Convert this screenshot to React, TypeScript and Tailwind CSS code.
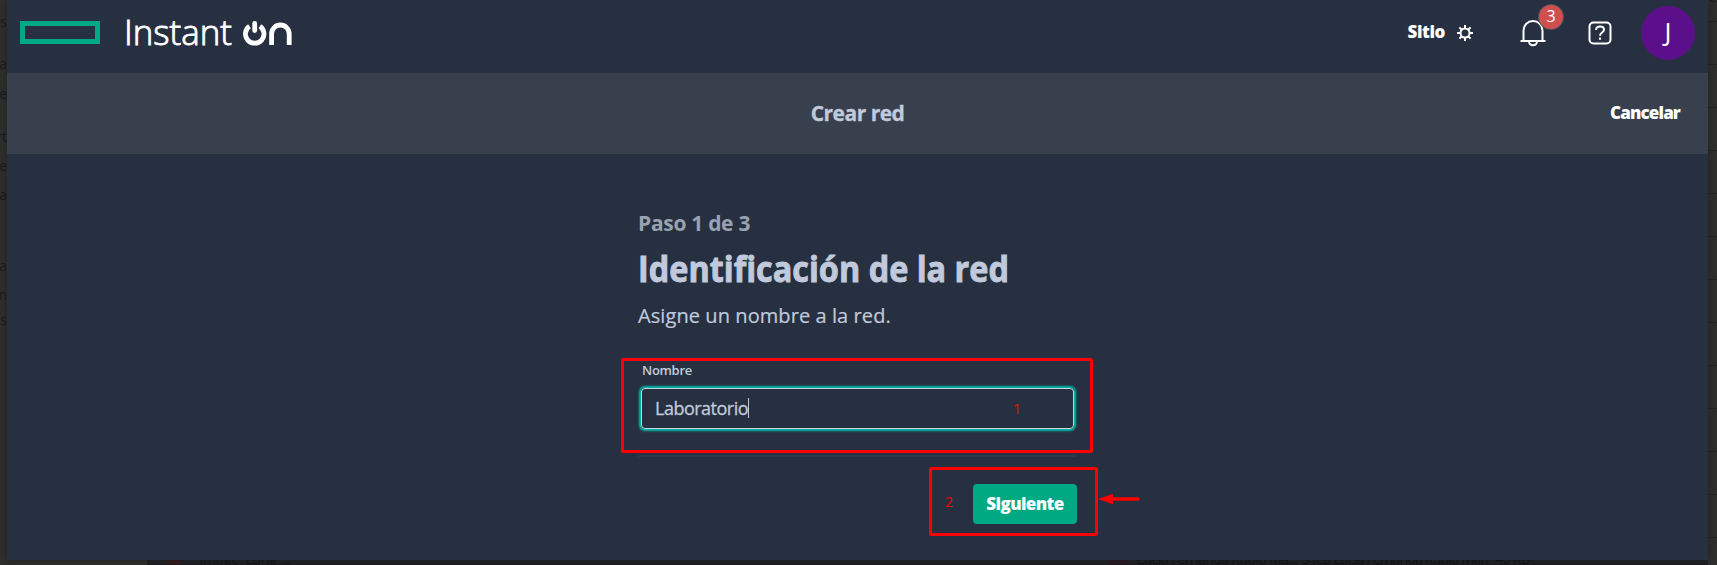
import React from "react";

const LEFT_WORDS = [
  { text: "os", top: "top-[12px]" },
  { text: "a", top: "top-[54px]" },
  { text: "be", top: "top-[84px]" },
  { text: "rt", top: "top-[127px]" },
  { text: "te", top: "top-[156px]" },
  { text: "a", top: "top-[185px]" },
  { text: "ra", top: "top-[256px]" },
  { text: "en", top: "top-[285px]" },
  { text: "us", top: "top-[310px]" },
];

const ROW_LINES = Array.from({ length: 13 }, (_, i) => i);

function Logo() {
  return (
    <div className="flex items-center">
      <div className="w-20 h-[23px] border-[5px] border-[#01a982]" />
      <svg width="175" height="40" viewBox="0 0 175 40" className="ml-6">
        <text
          x="0"
          y="32.5"
          fill="#fff"
          stroke="#fff"
          strokeWidth="0.9"
          fontSize="35.5"
          fontWeight="300"
          fontFamily="'Open Sans', sans-serif"
          textLength="108"
          lengthAdjust="spacingAndGlyphs"
        >
          Instant
        </text>
        <g fill="none" stroke="#fff" strokeWidth="4.8">
          <path d="M125.500 14.200a9.300 9.300 0 1 0 10.400 0" />
          <path d="M130.700 11.500v7" strokeLinecap="round" />
          <path d="M147.600 33V21.800a8.800 8.800 0 0 1 17.600 0V33" />
        </g>
      </svg>
    </div>
  );
}

function GearIcon() {
  return (
    <svg width="16" height="16" viewBox="0 0 16 16" fill="none" stroke="#fff" strokeWidth="2">
      <circle cx="8" cy="8" r="4.500" />
      <path d="M8 3.500V0M8 16v-3.500M3.500 8H0M16 8h-3.500M4.800 4.800 2.400 2.400M13.600 13.600l-2.400-2.400M4.800 11.200l-2.400 2.400M13.600 2.400l-2.400 2.400" />
    </svg>
  );
}

function BellIcon() {
  return (
    <svg width="26" height="28" viewBox="0 0 26 28" fill="none" stroke="#fff" strokeWidth="2">
      <path d="M3.500 22V11.500a9.500 9.500 0 0 1 19 0V22" />
      <path d="M.5 22h25" />
      <path d="M9 22.500a4 3.800 0 0 0 8 0" />
    </svg>
  );
}

function HelpIcon() {
  return (
    <svg width="24" height="24" viewBox="0 0 24 24" fill="none" stroke="#fff" strokeWidth="2">
      <rect x="1.500" y="1.500" width="21" height="21" rx="4" />
      <path d="M8 8.800C8.200 6.500 9.800 5.400 12 5.400c2.300 0 4 1.300 4 3.300 0 2.800-4 2.900-4 6" />
      <path d="M12 16.500v2.200" />
    </svg>
  );
}

function Header() {
  return (
    <header className="flex items-start justify-between h-[73px] pl-[13px] pr-[13px]">
      <div className="pt-3">
        <Logo />
      </div>
      <div className="flex items-center h-[65px] text-white">
        <span className="text-[17px] leading-6 mb-px font-extrabold tracking-[-0.4px] mr-3">Sitio</span>
        <GearIcon />
        <div className="relative ml-[47px]">
          <BellIcon />
          <span className="absolute -top-[14px] left-[19px] w-6 h-6 rounded-full bg-[#d04f4e] shadow-[0_0_0_1px_#4a5260] text-[16px] leading-[22px] text-center">
            3
          </span>
        </div>
        <div className="ml-[42px]">
          <HelpIcon />
        </div>
        <span className="ml-[29px] w-[54px] h-[54px] rounded-full bg-[#5c0f8b] text-[26px] leading-[50px] text-center">J</span>
      </div>
    </header>
  );
}

function TitleBar() {
  return (
    <div className="h-[81px] bg-[#38404d] grid grid-cols-[1fr_auto_1fr] items-center pr-7 pl-7">
      <span />
      <span className="text-[21px] font-bold tracking-[-0.5px] [-webkit-text-stroke:0.3px]">Crear red</span>
      <span className="text-[17px] leading-6 mb-px font-extrabold tracking-[-0.85px] text-white justify-self-end">Cancelar</span>
    </div>
  );
}

function NameField() {
  return (
    <div className="-ml-[17px] mt-7 w-[472px] h-[95px] border-[3px] border-[#fe0000] rounded-[2px] px-4">
      <div className="pl-[2px] text-[13px] leading-[18px] font-semibold tracking-[-0.3px]">Nombre</div>
      <div className="ml-px mt-[9px] w-[433px] h-[41px] rounded-[4px] border border-[#c5d5de] shadow-[0_0_2px_2px_#01b9ac] flex items-center justify-between pl-[13px] pr-[52px]">
        <div className="flex items-center mb-px">
          <span className="text-[18px] leading-6 tracking-[-0.500px] [-webkit-text-stroke:0.300px]">Laboratorio</span>
          <span className="w-px h-5 bg-[#c0cadc]" />
        </div>
        <span className="text-[14px] leading-5 text-[#fe0000]">1</span>
      </div>
    </div>
  );
}

function NextAction() {
  return (
    <div className="flex items-center ml-[291px] mt-[10px]">
      <div className="w-[169px] h-[69px] border-[3px] border-[#fe0000] rounded-[2px] flex justify-between items-start pl-[13px] pr-[18px] pt-[14px]">
        <span className="text-[14px] leading-9 text-[#fe0000]">2</span>
        <button className="w-[104px] h-10 rounded-[4px] bg-[#01a982] text-white text-[17px] leading-[38px] font-extrabold tracking-[-0.600px]">
          Siguiente
        </button>
      </div>
      <svg width="44" height="12" viewBox="0 0 44 12" className="-mt-[6px]">
        <path d="M0 6 15 .8v10.400Z" fill="#fe0000" />
        <path d="M14 6h26" stroke="#fe0000" strokeWidth="3.400" strokeLinecap="round" />
      </svg>
    </div>
  );
}

// Dimmed page that shows around the dialog's edges
function Backdrop() {
  return (
    <>
      <div className="absolute left-0 top-0 w-[7px] h-full overflow-hidden text-[14px] leading-5 text-[#1c1c1c]">
        {LEFT_WORDS.map((w) => (
          <span key={w.top} className={`absolute right-0 ${w.top}`}>
            {w.text}
          </span>
        ))}
      </div>
      <div className="absolute right-0 top-0 w-[9px] h-full overflow-hidden">
        <span className="absolute left-0 -top-[13px] text-[14px] leading-5 text-[#191919]">er</span>
        <div className="pt-[21px] flex flex-col gap-[42px]">
          {ROW_LINES.map((i) => (
            <div key={i} className="h-px shrink-0 bg-[#252524]" />
          ))}
        </div>
      </div>
      <div className="absolute left-[147px] right-[9px] bottom-0 h-[5px] overflow-hidden bg-[#212426] border-b border-[#201a20] text-[14px] leading-5 text-[#111314] whitespace-nowrap">
        <div className="absolute left-[19px] top-0 w-[14px] h-[5px] bg-[#351e1f]" />
        <span className="absolute left-[52px] -top-[11px]">Image_Long</span>
        <div className="absolute left-[134px] top-[2px] w-3 h-3 rounded-full bg-[#191b1c]" />
        <div className="absolute left-[961px] top-0 w-[21px] h-[5px] bg-[#2b1c20]" />
        <span className="absolute left-[990px] -top-[11px] tracking-[-0.600px]">Luisa Fernanda Rubio Ma...</span>
        <span className="absolute left-[1155px] -top-[11px] tracking-[-0.800px]">5 feb Luisa Fernanda Rubio Mari</span>
        <span className="absolute left-[1348px] -top-[11px] tracking-[-0.500px]">40 KB</span>
      </div>
    </>
  );
}

export default function App() {
  return (
    <div className="relative w-[1717px] h-[565px] overflow-hidden bg-[#2f2f2e] pl-[7px] pr-[9px] font-['Open_Sans',sans-serif]">
      <Backdrop />
      <div className="relative h-[560px] bg-[#273040] text-[#c0cadc] shadow-[0_0_10px_rgba(0,0,0,0.3)]">
        <Header />
        <TitleBar />
        <main className="ml-[631px] pt-[54px]">
          <p className="text-[21px] leading-[30px] font-bold tracking-[-0.3px] text-[#99a2b0]">Paso 1 de 3</p>
          <h1 className="mt-[7px] w-max origin-left scale-x-[0.926] text-[35px] leading-[48px] font-bold [-webkit-text-stroke:0.900px]">
            Identificación de la red
          </h1>
          <p className="mt-[9px] text-[20px] leading-7 tracking-[0.080px] [-webkit-text-stroke:0.200px]">Asigne un nombre a la red.</p>
          <NameField />
          <div className="mt-[2px] w-[439px] h-[2px] bg-[#303949]" />
          <NextAction />
        </main>
      </div>
    </div>
  );
}
